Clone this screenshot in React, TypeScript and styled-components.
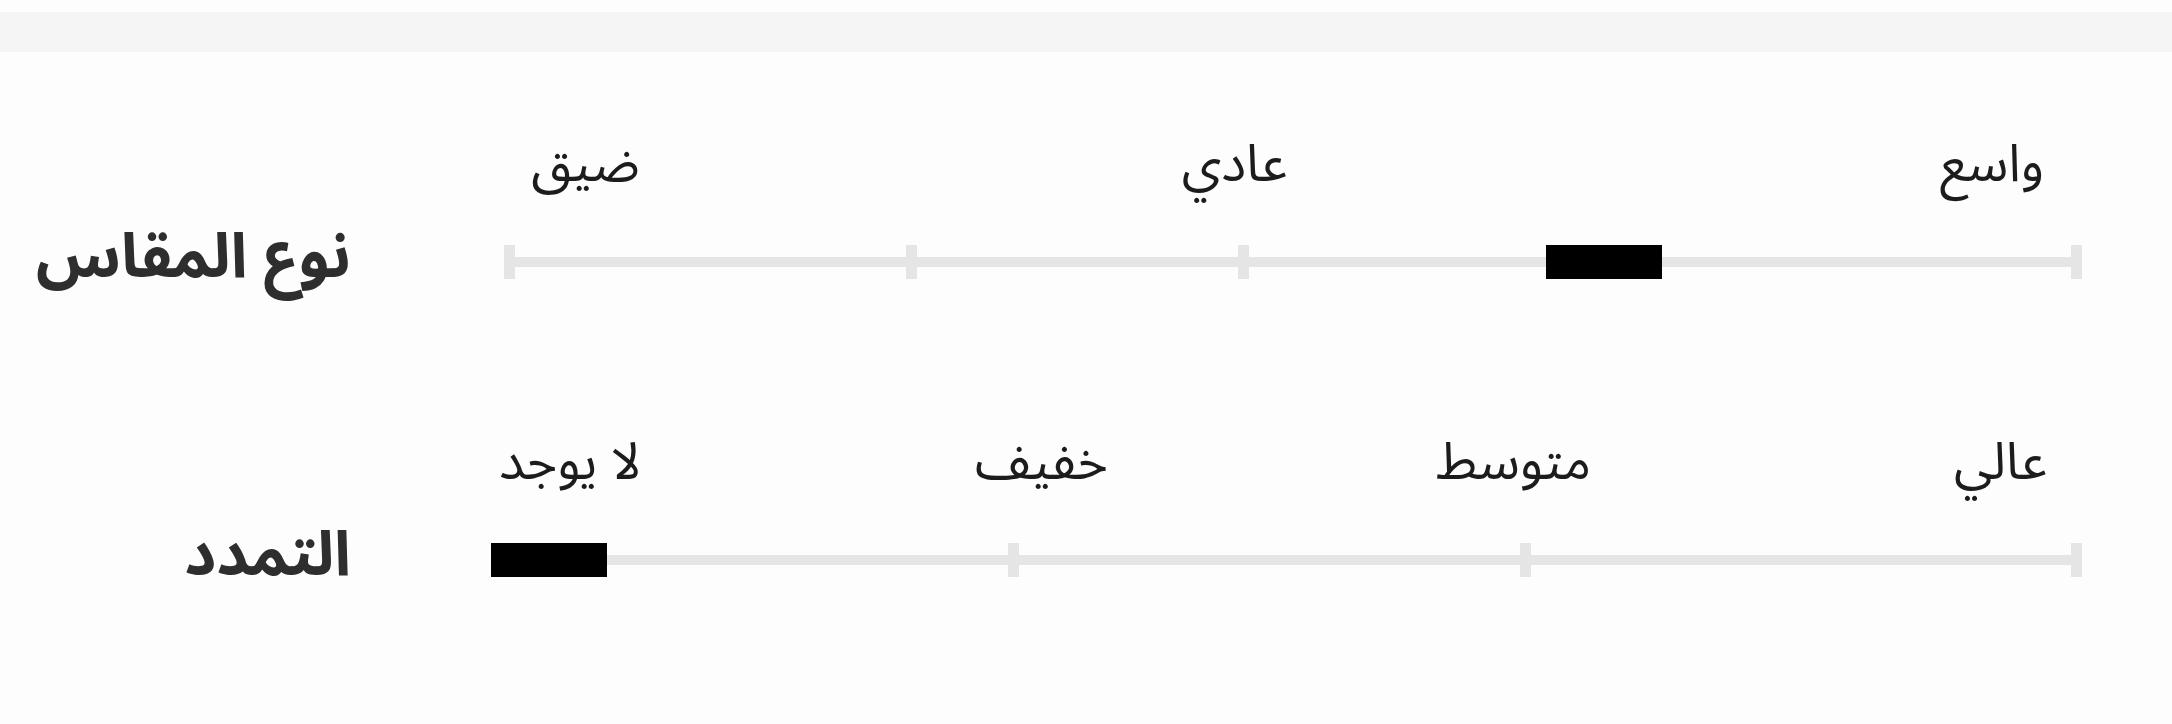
import React from "react";
import styled, { createGlobalStyle } from "styled-components";

const GlobalStyle = createGlobalStyle`
  html, body {
    margin: 0;
    padding: 0;
    background: #fdfdfd;
  }
  body {
    font-family: "Noto Sans Arabic", "Noto Naskh Arabic", "DejaVu Sans", "Noto Sans", sans-serif;
    color: #1f1f1f;
  }
`;

const Page = styled.div`
  width: 2172px;
  height: 724px;
  overflow: hidden;
  background: #fdfdfd;
`;

const TopBar = styled.div`
  margin-top: 12px;
  height: 40px;
  background: #f5f5f5;
`;

const Settings = styled.div`
  display: flex;
  flex-direction: column;
  gap: 159px;
  padding-top: 88px;
`;

const Row = styled.div`
  display: grid;
  grid-template-columns: 351px 1591px;
  grid-template-rows: 60px 34px;
  column-gap: 140px;
  row-gap: 45px;
`;

const RowLabel = styled.div`
  grid-column: 1;
  grid-row: 2;
  display: flex;
  align-items: center;
  justify-content: flex-end;
  padding-bottom: 8px;
  font-size: 62px;
  line-height: 26px;
  font-weight: 700;
  color: #2e2e2e;
  white-space: nowrap;
`;

const OptionLabels = styled.div`
  grid-column: 2;
  grid-row: 1;
  position: relative;
`;

const OptionLabel = styled.span`
  position: absolute;
  top: 0;
  transform: translateX(-50%);
  font-size: 52px;
  line-height: 50px;
  white-space: nowrap;
  direction: rtl;
  color: #1c1c1c;
`;

const Track = styled.div`
  grid-column: 2;
  grid-row: 2;
  position: relative;
`;

const Bar = styled.div<{ $start: number }>`
  position: absolute;
  left: ${(p) => p.$start}px;
  right: 0;
  top: 12px;
  height: 10px;
  background: #e5e5e5;
`;

const Tick = styled.div`
  position: absolute;
  top: 0;
  width: 11px;
  height: 34px;
  margin-left: -5.5px;
  background: #e5e5e5;
`;

const Thumb = styled.div`
  position: absolute;
  top: 0;
  width: 116px;
  height: 34px;
  margin-left: -58px;
  background: #000;
`;

type Option = { text: string; at: number };

type ScaleSetting = {
  title: string;
  barStart: number;
  options: Option[];
  ticks: number[];
  value: number;
};

const settings: ScaleSetting[] = [
  {
    title: "نوع المقاس",
    barStart: 13,
    options: [
      { text: "ضيق", at: 94.5 },
      { text: "عادي", at: 743.5 },
      { text: "واسع", at: 1501 },
    ],
    ticks: [18.5, 420.5, 752.5, 1585.5],
    value: 1113,
  },
  {
    title: "التمدد",
    barStart: 0,
    options: [
      { text: "لا يوجد", at: 79 },
      { text: "خفيف", at: 550.5 },
      { text: "متوسط", at: 1022.5 },
      { text: "عالي", at: 1509.5 },
    ],
    ticks: [522.5, 1034.5, 1585.5],
    value: 58,
  },
];

function ScaleRow({ setting }: { setting: ScaleSetting }) {
  return (
    <Row>
      <RowLabel>
        <bdi>{setting.title}</bdi>
      </RowLabel>
      <OptionLabels>
        {setting.options.map((o) => (
          <OptionLabel key={o.text} style={{ left: o.at }}>
            {o.text}
          </OptionLabel>
        ))}
      </OptionLabels>
      <Track>
        <Bar $start={setting.barStart} />
        {setting.ticks.map((t) => (
          <Tick key={t} style={{ left: t }} />
        ))}
        <Thumb style={{ left: setting.value }} />
      </Track>
    </Row>
  );
}

export default function App() {
  return (
    <Page>
      <GlobalStyle />
      <TopBar />
      <Settings>
        {settings.map((s) => (
          <ScaleRow key={s.title} setting={s} />
        ))}
      </Settings>
    </Page>
  );
}
